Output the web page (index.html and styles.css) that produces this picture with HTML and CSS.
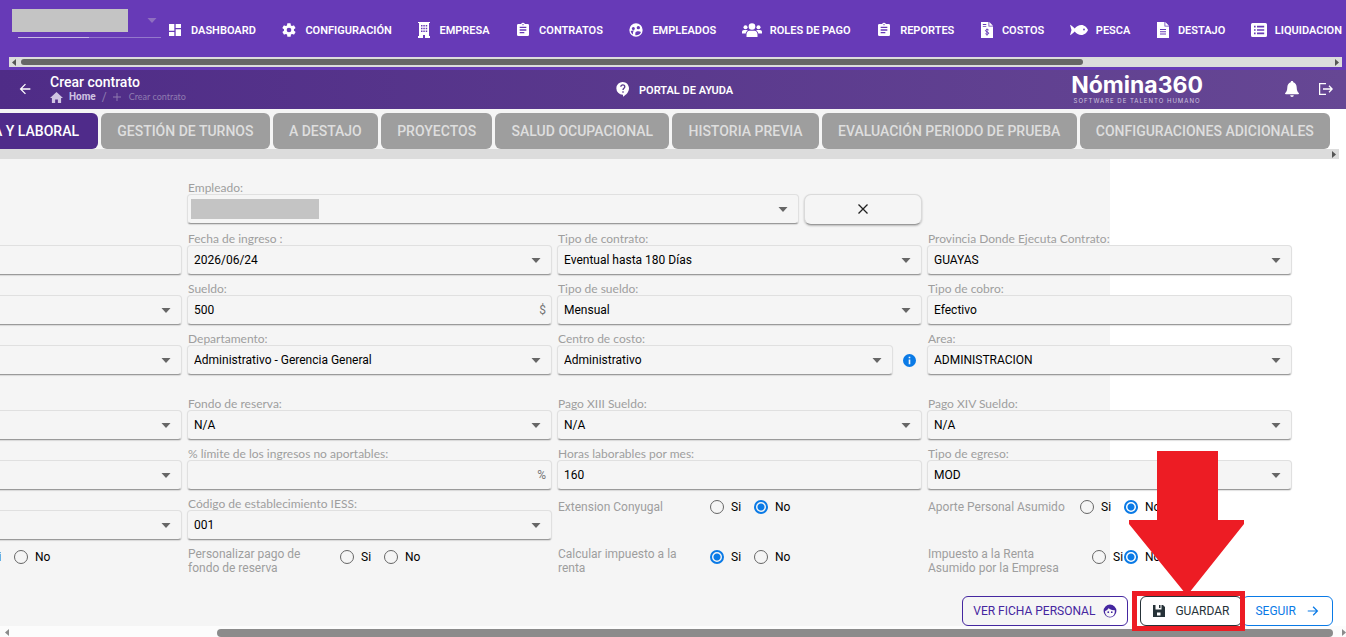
FILE: index.html
```html
<!DOCTYPE html>
<html lang="es">
<head>
    <meta charset="UTF-8">
    <meta name="viewport" content="width=device-width, initial-scale=1.0">
    <title>Crear contrato - Nómina360</title>
    <link rel="stylesheet" href="styles.css">
</head>
<body>

<!-- Iconos compartidos -->
<svg class="sprite" aria-hidden="true">
    <symbol id="caret" viewBox="0 0 10 5"><path d="M0.5 0h9L5 5z"/></symbol>
    <symbol id="clipboard" viewBox="0 0 24 24"><path d="M19 3h-4.2a3 3 0 0 0-5.600 0H5a2 2 0 0 0-2 2v14a2 2 0 0 0 2 2h14a2 2 0 0 0 2-2V5a2 2 0 0 0-2-2zm-7 0a1 1 0 1 1 0 2 1 1 0 0 1 0-2zm2 14H7v-2h7zm3-4H7v-2h10zm0-4H7V7h10z"/></symbol>
    <symbol id="arrow-left" viewBox="0 0 24 24"><path d="M20 11H7.800l5.600-5.600L12 4l-8 8 8 8 1.400-1.400L7.800 13H20z"/></symbol>
</svg>

<header>
    <div class="menu">
        <div class="account">
            <div class="account-row">
                <span class="redacted account-name"></span>
                <svg class="caret"><use href="#caret"/></svg>
            </div>
            <div class="account-line"></div>
        </div>
        <nav>
            <a href="#"><svg class="icon" viewBox="0 0 24 24"><path d="M3 13h8V3H3zm0 8h8v-6H3zm10 0h8V11h-8zm0-18v6h8V3z"/></svg>DASHBOARD</a>
            <a href="#"><svg class="icon" viewBox="0 0 24 24"><path fill-rule="evenodd" d="M19.400 13a7.500 7.500 0 0 0 0-2l2.100-1.600a.5.5 0 0 0 .1-.6l-2-3.500a.5.5 0 0 0-.6-.2l-2.500 1a7 7 0 0 0-1.700-1l-.4-2.700a.5.5 0 0 0-.5-.4h-4a.5.5 0 0 0-.5.4L9 5.100a7 7 0 0 0-1.700 1l-2.500-1a.5.5 0 0 0-.6.2l-2 3.500a.5.5 0 0 0 .1.600L4.500 11a7.500 7.500 0 0 0 0 2l-2.100 1.600a.5.5 0 0 0-.1.600l2 3.500c.1.200.4.300.6.200l2.500-1a7 7 0 0 0 1.700 1l.4 2.700c0 .2.200.4.500.4h4c.3 0 .5-.2.500-.4l.4-2.700a7 7 0 0 0 1.700-1l2.500 1c.2.100.5 0 .6-.2l2-3.500a.5.5 0 0 0-.1-.6zM12 15.500a3.500 3.500 0 1 1 0-7 3.500 3.500 0 0 1 0 7z"/></svg>CONFIGURACIÓN</a>
            <a href="#"><svg class="icon icon-tall" viewBox="0 0 14 16"><path fill-rule="evenodd" d="M1 0h12v1h-1v13h1v2H8v-3H6v3H1v-2h1V1H1zM4 3v1.500h1.500V3zm2.300 0v1.500h1.500V3zm2.400 0v1.500h1.500V3zM4 5.700v1.500h1.500V5.700zm2.300 0v1.500h1.500V5.700zm2.400 0v1.500h1.500V5.700zM4 8.500V10h1.500V8.500zm2.300 0V10h1.500V8.500zm2.400 0V10h1.500V8.500z"/></svg>EMPRESA</a>
            <a href="#"><svg class="icon"><use href="#clipboard"/></svg>CONTRATOS</a>
            <a href="#"><svg class="icon" viewBox="0 0 24 24"><path fill-rule="evenodd" d="M12 2a10 10 0 1 0 0 20 10 10 0 0 0 0-20zM8 7.500a2.300 2.300 0 1 1 0 4.600 2.300 2.300 0 0 1 0-4.600zm7.500-1.500a2.500 2.500 0 1 1 0 5 2.500 2.500 0 0 1 0-5zM4 13.500c1-.8 3.500-1.200 5.500-.6-1.500 1-2 2-2 3.500v2.200A8 8 0 0 1 4 13.500zm7 6.300v-3.300c0-3 6-3.600 8.500-1.500A8 8 0 0 1 11 19.800z"/></svg>EMPLEADOS</a>
            <a href="#"><svg class="icon icon-wide" viewBox="0 0 20 14"><circle cx="10" cy="3.500" r="3.300"/><circle cx="3.500" cy="4.300" r="2"/><circle cx="16.500" cy="4.300" r="2"/><path d="M4.500 14v-2.500c0-2 1.300-3.700 3-3.700h5c1.700 0 3 1.700 3 3.700V14zM0 10.500V9c0-1.300.8-2 2-2h2.600c.5 0 1 .2 1.300.5-1.200.7-2 1.600-2.200 3zM20 10.500V9c0-1.300-.8-2-2-2h-2.600c-.5 0-1 .2-1.300.5 1.200.7 2 1.600 2.200 3z"/></svg>ROLES DE PAGO</a>
            <a href="#"><svg class="icon"><use href="#clipboard"/></svg>REPORTES</a>
            <a href="#"><svg class="icon icon-tall" viewBox="0 0 14 16"><path fill-rule="evenodd" d="M1 0h7.500v4.500H13V16H1zM9.300 0L13 3.700H9.300zM2.800 2v.9h3.500V2zm0 1.900v.9h3.500v-.9z"/><path class="cut" d="M8.700 8c-1-.9-3.200-.6-3.200.7 0 1.600 3.200.9 3.200 2.500 0 1.300-2.300 1.500-3.300.5M7 6.600v7"/></svg>COSTOS</a>
            <a href="#"><svg class="icon icon-fish" viewBox="0 0 18 12"><path fill-rule="evenodd" d="M0 .8c1.800.8 3.500 2.300 4.700 3.700C6.500 2.300 8.700 1 11.300 1 14.500 1 17 3.500 18 6c-1 2.500-3.500 5-6.700 5-2.600 0-4.800-1.300-6.600-3.500C3.500 8.900 1.800 10.400 0 11.200L1.500 6zM14 4.600a.9.900 0 1 0 0 1.800.9.900 0 0 0 0-1.800z"/></svg>PESCA</a>
            <a href="#"><svg class="icon icon-tall" viewBox="0 0 14 16"><path fill-rule="evenodd" d="M1 0h7.500v4.500H13V16H1zM9.300 0L13 3.700H9.300zM4 7v1h6V7zm0 2.200v1h6v-1zm0 2.300v1h6v-1z"/></svg>DESTAJO</a>
            <a href="#"><svg class="icon" viewBox="0 0 16 14"><path fill-rule="evenodd" d="M1.500 0h13A1.500 1.500 0 0 1 16 1.500v11a1.500 1.500 0 0 1-1.500 1.500h-13A1.500 1.500 0 0 1 0 12.500v-11A1.500 1.500 0 0 1 1.500 0zM3 2.800v1.600h1.600V2.800zm3 0v1.600h7.200V2.800zM3 6.200v1.600h1.600V6.200zm3 0v1.600h7.200V6.200zM3 9.600v1.600h1.600V9.600zm3 0v1.600h7.200V9.600z"/></svg>LIQUIDACION</a>
        </nav>
    </div>
    <div class="scroll scroll-menu">
        <svg class="scroll-arrow" viewBox="0 0 4 7"><path d="M4 0v7L0 3.500z"/></svg>
        <div class="thumb"></div>
        <svg class="scroll-arrow" viewBox="0 0 4 7"><path d="M0 0v7l4-3.500z"/></svg>
    </div>
</header>

<div class="titlebar">
    <a href="#" class="back" aria-label="Volver"><svg class="icon"><use href="#arrow-left"/></svg></a>
    <div class="title">
        <h1>Crear contrato</h1>
        <div class="breadcrumb">
            <a href="#"><svg class="icon-home" viewBox="0 0 24 20"><path d="M12 0L0 11h3.500v9h6v-6.500h5V20h6v-9H24z"/></svg>Home</a>
            <span class="slash">/</span>
            <span class="crumb"><svg class="icon-plus" viewBox="0 0 10 10"><path d="M4.400 0h1.200v4.400H10v1.200H5.600V10H4.400V5.600H0V4.400h4.400z"/></svg>Crear contrato</span>
        </div>
    </div>
    <a href="#" class="help"><svg class="icon" viewBox="0 0 24 24"><path d="M11.500 0a9.500 9.500 0 1 0 0 19h.5v3c4.900-2.300 9-7.300 9-12.500C21 4.300 16.700 0 11.500 0z"/><path class="cut-dark" d="M8.700 7.300c0-4 6-3.700 6-.2 0 2.300-2.700 2.300-2.700 5M12 14v2.200"/></svg>PORTAL DE AYUDA</a>
    <div class="logo">
        <span class="logo-name">Nómina360</span>
        <span class="logo-tag">SOFTWARE DE TALENTO HUMANO</span>
    </div>
    <a href="#" class="bell" aria-label="Notificaciones"><svg viewBox="0 0 14 16"><path d="M7 0c-.8 0-1.300.5-1.300 1.300C3.500 2 2.300 4 2.300 6.500c0 3-1 4.500-2.100 5.500-.4.600 0 1.300.7 1.300h12.200c.7 0 1.100-.7.700-1.300-1.100-1-2.100-2.500-2.100-5.500C11.700 4 10.500 2 8.300 1.300 8.300.5 7.800 0 7 0zM5.200 14.200h3.600a1.800 1.800 0 0 1-3.600 0z"/></svg></a>
    <a href="#" class="logout" aria-label="Salir"><svg viewBox="0 0 14 12"><path d="M7 .6H.6v10.800H7M4 6h9M10 2.800L13.200 6 10 9.200"/></svg></a>
</div>

<div class="tabs">
    <button class="tab tab-active">A Y LABORAL</button>
    <button class="tab">GESTIÓN DE TURNOS</button>
    <button class="tab">A DESTAJO</button>
    <button class="tab">PROYECTOS</button>
    <button class="tab">SALUD OCUPACIONAL</button>
    <button class="tab">HISTORIA PREVIA</button>
    <button class="tab">EVALUACIÓN PERIODO DE PRUEBA</button>
    <button class="tab">CONFIGURACIONES ADICIONALES</button>
</div>
<div class="scroll scroll-tabs">
    <svg class="scroll-arrow" viewBox="0 0 4 7"><path d="M0 0v7l4-3.500z"/></svg>
</div>

<main>
    <form>
        <div class="employee">
            <div class="field">
                <label for="empleado">Empleado:</label>
                <div class="box">
                    <span class="redacted employee-name"></span>
                    <select id="empleado"><option></option></select>
                    <svg class="caret"><use href="#caret"/></svg>
                </div>
            </div>
            <button type="button" class="clear" aria-label="Quitar empleado"><svg viewBox="0 0 10 10"><path d="M.5.5l9 9M9.500.5l-9 9"/></svg></button>
        </div>

        <div class="field first">
            <div class="box"><input type="text" aria-label="Número"></div>
        </div>
        <div class="field">
            <label for="fecha">Fecha de ingreso :</label>
            <div class="box"><input type="text" id="fecha" value="2026/06/24"><svg class="caret"><use href="#caret"/></svg></div>
        </div>
        <div class="field">
            <label for="tipoContrato">Tipo de contrato:</label>
            <div class="box"><select id="tipoContrato"><option>Eventual hasta 180 Días</option></select><svg class="caret"><use href="#caret"/></svg></div>
        </div>
        <div class="field">
            <label for="provincia">Provincia Donde Ejecuta Contrato:</label>
            <div class="box"><select id="provincia"><option>GUAYAS</option></select><svg class="caret"><use href="#caret"/></svg></div>
        </div>

        <div class="field first">
            <div class="box"><select aria-label="Cargo"><option></option></select><svg class="caret"><use href="#caret"/></svg></div>
        </div>
        <div class="field">
            <label for="sueldo">Sueldo:</label>
            <div class="box"><input type="text" id="sueldo" value="500"><span class="unit">$</span></div>
        </div>
        <div class="field">
            <label for="tipoSueldo">Tipo de sueldo:</label>
            <div class="box"><select id="tipoSueldo"><option>Mensual</option></select><svg class="caret"><use href="#caret"/></svg></div>
        </div>
        <div class="field">
            <label for="tipoCobro">Tipo de cobro:</label>
            <div class="box"><select id="tipoCobro"><option>Efectivo</option></select></div>
        </div>

        <div class="field first">
            <div class="box"><select aria-label="Sucursal"><option></option></select><svg class="caret"><use href="#caret"/></svg></div>
        </div>
        <div class="field">
            <label for="departamento">Departamento:</label>
            <div class="box"><select id="departamento"><option>Administrativo - Gerencia General</option></select><svg class="caret"><use href="#caret"/></svg></div>
        </div>
        <div class="field">
            <label for="centroCosto">Centro de costo:</label>
            <div class="with-info">
                <div class="box"><select id="centroCosto"><option>Administrativo</option></select><svg class="caret"><use href="#caret"/></svg></div>
                <svg class="info" viewBox="0 0 24 24"><path fill-rule="evenodd" d="M12 0a12 12 0 1 0 0 24 12 12 0 0 0 0-24zm-1.500 5h3v3h-3zm0 5h3v9h-3z"/></svg>
            </div>
        </div>
        <div class="field">
            <label for="area">Area:</label>
            <div class="box"><select id="area"><option>ADMINISTRACION</option></select><svg class="caret"><use href="#caret"/></svg></div>
        </div>

        <div class="field first section">
            <div class="box"><select aria-label="Forma de pago"><option></option></select><svg class="caret"><use href="#caret"/></svg></div>
        </div>
        <div class="field section">
            <label for="fondo">Fondo de reserva:</label>
            <div class="box"><select id="fondo"><option>N/A</option></select><svg class="caret"><use href="#caret"/></svg></div>
        </div>
        <div class="field section">
            <label for="pago13">Pago XIII Sueldo:</label>
            <div class="box"><select id="pago13"><option>N/A</option></select><svg class="caret"><use href="#caret"/></svg></div>
        </div>
        <div class="field section">
            <label for="pago14">Pago XIV Sueldo:</label>
            <div class="box"><select id="pago14"><option>N/A</option></select><svg class="caret"><use href="#caret"/></svg></div>
        </div>

        <div class="field first">
            <div class="box"><select aria-label="Aporte"><option></option></select><svg class="caret"><use href="#caret"/></svg></div>
        </div>
        <div class="field">
            <label for="limite">% límite de los ingresos no aportables:</label>
            <div class="box"><input type="text" id="limite"><span class="unit">%</span></div>
        </div>
        <div class="field">
            <label for="horas">Horas laborables por mes:</label>
            <div class="box"><input type="text" id="horas" value="160"></div>
        </div>
        <div class="field">
            <label for="egreso">Tipo de egreso:</label>
            <div class="box"><select id="egreso"><option>MOD</option></select><svg class="caret"><use href="#caret"/></svg></div>
        </div>

        <div class="field first">
            <div class="box"><select aria-label="Código sectorial"><option></option></select><svg class="caret"><use href="#caret"/></svg></div>
        </div>
        <div class="field">
            <label for="iess">Código de establecimiento IESS:</label>
            <div class="box"><select id="iess"><option>001</option></select><svg class="caret"><use href="#caret"/></svg></div>
        </div>
        <div class="choice choice-single" role="radiogroup" aria-labelledby="extension">
            <span class="choice-name" id="extension">Extension Conyugal</span>
            <label><input type="radio" name="extension">Si</label>
            <label><input type="radio" name="extension" checked>No</label>
        </div>
        <div class="choice choice-single" role="radiogroup" aria-labelledby="aporte">
            <span class="choice-name" id="aporte">Aporte Personal Asumido</span>
            <label><input type="radio" name="aporte">Si</label>
            <label><input type="radio" name="aporte" checked>No</label>
        </div>

        <div class="choice" role="radiogroup">
            <span class="choice-name"></span>
            <label><input type="radio" name="acumula">Si</label>
            <label><input type="radio" name="acumula">No</label>
        </div>
        <div class="choice" role="radiogroup" aria-labelledby="personalizar">
            <span class="choice-name" id="personalizar">Personalizar pago de<br>fondo de reserva</span>
            <label><input type="radio" name="personalizar">Si</label>
            <label><input type="radio" name="personalizar">No</label>
        </div>
        <div class="choice" role="radiogroup" aria-labelledby="calcular">
            <span class="choice-name" id="calcular">Calcular impuesto a la<br>renta</span>
            <label><input type="radio" name="calcular" checked>Si</label>
            <label><input type="radio" name="calcular">No</label>
        </div>
        <div class="choice choice-tight" role="radiogroup" aria-labelledby="impuesto">
            <span class="choice-name" id="impuesto">Impuesto a la Renta<br>Asumido por la Empresa</span>
            <label><input type="radio" name="impuesto">Si</label>
            <label><input type="radio" name="impuesto" checked>No</label>
        </div>
    </form>

    <div class="actions">
        <button class="btn btn-profile">VER FICHA PERSONAL<svg viewBox="0 0 24 24"><path fill-rule="evenodd" d="M12 1a11 11 0 1 0 0 22 11 11 0 0 0 0-22zM3.500 12c3-.8 5.200-2.600 6.300-5 2.200 2.800 6 4 10 3.400A8.500 8.500 0 1 1 3.500 12z"/><circle cx="9" cy="14" r="1.500"/><circle cx="15" cy="14" r="1.500"/></svg></button>
        <div class="save">
            <button class="btn btn-save"><svg viewBox="0 0 12 12"><path fill-rule="evenodd" d="M0 0h2.500v4.500h6V0H10l2 2v10H0zM6 0h1.500v3H6zM4 7.500v3h3.500v-3z"/></svg>GUARDAR</button>
            <div class="frame"></div>
            <svg class="pointer" viewBox="0 0 116 142"><path d="M28 0h61v69h26v4L60 142h-4L0 73v-4h28z"/></svg>
        </div>
        <button class="btn btn-next">SEGUIR<svg viewBox="0 0 24 24"><path d="M3 11h14l-5.600-5.600L13 4l8 8-8 8-1.400-1.400L17 13H3z"/></svg></button>
    </div>
</main>
<div class="scroll scroll-page">
    <svg class="scroll-arrow" viewBox="0 0 4 7"><path d="M4 0v7L0 3.500z"/></svg>
    <div class="thumb"></div>
    <svg class="scroll-arrow" viewBox="0 0 4 7"><path d="M0 0v7l4-3.500z"/></svg>
</div>

</body>
</html>
```
FILE: styles.css
```css
* {
    box-sizing: border-box;
}
body {
    font-family: Roboto, "Liberation Sans", sans-serif;
    font-size: 12px;
    margin: 0;
    min-height: 100vh;
    display: flex;
    flex-direction: column;
    overflow: hidden;
    background: linear-gradient(to right, #f5f5f5 1110px, #fff 1110px);
}
a {
    color: inherit;
    text-decoration: none;
}
button, input, select {
    font: inherit;
    margin: 0;
}
svg {
    fill: currentColor;
    flex: none;
}
.sprite {
    display: none;
}
.icon {
    width: 16px;
    height: 16px;
}
.icon-tall {
    width: 14px;
}
.icon-wide {
    width: 20px;
    height: 14px;
}
.icon-fish {
    width: 18px;
    height: 12px;
}
.caret {
    width: 10px;
    height: 5px;
    color: #666;
}
.redacted {
    background-color: #c4c4c4;
    flex: none;
}

/* Menú principal */
header {
    background-color: #673ab7;
    color: #fff;
    padding-bottom: 3px;
}
.menu {
    display: flex;
    height: 57px;
    padding: 0 4px 0 12px;
    overflow: hidden;
}
.account {
    flex: none;
    width: 149px;
    padding-top: 9px;
}
.account-row {
    display: flex;
    justify-content: space-between;
    align-items: center;
    padding-right: 4px;
}
.account-row .caret {
    color: #8f6fc0;
}
.account-name {
    width: 116px;
    height: 23px;
}
.account-line {
    height: 1px;
    margin: 5px 0 0 6px;
    background: linear-gradient(to right, #c9bbe3 50%, #9478cb 50%);
}
nav {
    display: flex;
    flex: 1;
    justify-content: space-between;
    min-width: 0;
    overflow: hidden;
    padding: 3px 0 0 6px;
}
nav a {
    display: flex;
    align-items: center;
    gap: 8px;
    font-size: 11px;
    font-weight: 600;
    white-space: nowrap;
}
.cut {
    fill: none;
    stroke: #673ab7;
}
.cut-dark {
    fill: none;
    stroke: #5a3a8e;
    stroke-width: 2;
}

/* Barras de desplazamiento */
.scroll {
    display: flex;
    align-items: center;
    height: 10px;
    background-color: #dcdcdc;
    color: #555;
}
.scroll-arrow {
    width: 4px;
    height: 7px;
}
.thumb {
    border-radius: 4px;
}
.scroll-menu {
    margin: 0 4px 0 9px;
    padding: 0 3px;
    justify-content: space-between;
}
.scroll-menu .thumb {
    width: 80%;
    height: 6px;
    margin: 0 auto 0 5px;
    background-color: #666;
}
.scroll-tabs {
    margin-right: 7px;
    padding-right: 3px;
    justify-content: flex-end;
}
.scroll-page {
    height: 11px;
    padding: 2px 0 0 5px;
    background-color: #fcfcfc;
    color: #8b8b8b;
}
.scroll-page .thumb {
    flex: 1;
    height: 8px;
    margin: 0 9px 0 208px;
    background-color: #8b8b8b;
}

/* Barra de título */
.titlebar {
    display: flex;
    align-items: center;
    height: 39px;
    padding: 0 13px 1px 17px;
    background: linear-gradient(to right, #4f2c87, #664794);
    color: #fff;
}
.back {
    display: flex;
    width: 33px;
}
.title {
    width: 565px;
}
h1 {
    margin: 0;
    font-size: 14px;
    font-weight: 500;
    line-height: 16px;
}
.breadcrumb {
    display: flex;
    align-items: center;
    gap: 6px;
    font-size: 10px;
    line-height: 14px;
    color: #8f7bb0;
}
.breadcrumb a {
    display: flex;
    align-items: center;
    gap: 6px;
    color: #d0c4e2;
    font-weight: 700;
}
.crumb {
    display: flex;
    align-items: center;
    gap: 8px;
    font-family: Lato, sans-serif;
    font-size: 9px;
}
.icon-home {
    width: 13px;
    height: 11px;
}
.icon-plus {
    width: 8px;
    height: 8px;
}
.slash {
    font-size: 12px;
}
.help {
    display: flex;
    align-items: center;
    gap: 8px;
    padding-top: 2px;
    font-size: 11px;
    font-weight: 600;
}
.logo {
    display: flex;
    flex-direction: column;
    align-items: center;
    margin-left: auto;
}
.logo-name {
    font-family: Inter, "Open Sans", sans-serif;
    font-size: 23px;
    font-weight: 700;
    line-height: 24px;
}
.logo-tag {
    font-family: Inter, "Open Sans", sans-serif;
    font-size: 6px;
    line-height: 8px;
    letter-spacing: 1px;
    color: #cfc3df;
}
.bell {
    display: flex;
    margin-left: 82px;
}
.bell svg {
    width: 14px;
    height: 16px;
}
.logout {
    display: flex;
    margin-left: 20px;
}
.logout svg {
    width: 14px;
    height: 12px;
    fill: none;
    stroke: currentColor;
    stroke-width: 1.3;
}

/* Pestañas */
.tabs {
    display: flex;
    gap: 3px;
    padding: 4px 16px 0 0;
}
.tab {
    flex: auto;
    height: 36px;
    padding: 0 12px;
    border: none;
    border-radius: 6px;
    background-color: #9e9e9e;
    color: #dedede;
    font-size: 14px;
    font-weight: 500;
    white-space: nowrap;
    cursor: pointer;
}
.tab-active {
    flex: none;
    width: 130px;
    margin-left: -32px;
    padding-right: 19px;
    background-color: #4f2b8a;
    color: #fff;
    text-align: right;
}

/* Formulario */
main {
    flex: 1;
    display: flex;
    flex-direction: column;
}
form {
    display: grid;
    grid-template-columns: repeat(4, 1fr);
    gap: 6px 5px;
    margin: 0 54px 0 -183px;
    padding-top: 21px;
}
.employee {
    grid-column: 2 / 4;
    display: flex;
    align-items: flex-start;
    gap: 5px;
}
.employee .field {
    flex: 1;
}
.employee + .field {
    grid-column: 1;
}
.field {
    display: flex;
    flex-direction: column;
    min-width: 0;
}
.field label {
    height: 14px;
    padding-left: 1px;
    font-family: Lato, sans-serif;
    line-height: 16px;
    color: #9e9e9e;
}
.first {
    padding-top: 14px;
}
.section {
    margin-top: 15px;
}
.box {
    display: flex;
    align-items: center;
    height: 30px;
    padding: 0 10px 0 6px;
    border: 1px solid #e0e0e0;
    border-bottom-color: #9a9a9a;
    border-radius: 4px;
    background-color: #f5f5f5;
    box-shadow: 0 1px 1px rgba(0, 0, 0, 0.12);
}
.box input, .box select {
    flex: 1;
    min-width: 0;
    height: 100%;
    padding: 0;
    border: none;
    background: none;
    color: #000;
    appearance: none;
    outline: none;
}
.unit {
    color: #757575;
    margin-right: -5px;
}
.employee-name {
    width: 128px;
    height: 20px;
    margin-left: -3px;
}
.clear {
    width: 118px;
    height: 31px;
    margin-top: 14px;
    border: 1px solid #dadada;
    border-bottom-color: #9a9a9a;
    border-radius: 7px;
    background-color: #f5f5f5;
    box-shadow: 0 1px 2px rgba(0, 0, 0, 0.25);
    cursor: pointer;
}
.clear svg {
    width: 10px;
    height: 10px;
    stroke: #212121;
    stroke-width: 1.3;
}
.with-info {
    display: flex;
    align-items: center;
}
.with-info .box {
    flex: 1;
}
.info {
    width: 13px;
    height: 13px;
    margin: 0 6px 0 10px;
    color: #0a7ae6;
}
.choice {
    display: flex;
    align-items: flex-start;
    padding-left: 1px;
}
.choice-name {
    width: 152px;
    line-height: 14px;
    color: #9e9e9e;
    padding-top: 1px;
}
.choice-single .choice-name {
    line-height: 21px;
}
.choice label {
    display: flex;
    align-items: center;
    gap: 7px;
    width: 44px;
    height: 21px;
    color: #000;
}
.choice input {
    flex: none;
    width: 14px;
    height: 14px;
    appearance: none;
    border: 1px solid #666;
    border-radius: 50%;
}
.choice input:checked {
    border: 2px solid #0a7ae6;
    background: radial-gradient(#0a7ae6 3px, transparent 4px);
}
.choice-tight .choice-name {
    width: 164px;
}
.choice-tight .choice-name + label {
    width: 32px;
}

/* Botones inferiores */
.actions {
    display: flex;
    justify-content: flex-end;
    margin-top: auto;
    padding-right: 13px;
}
.btn {
    display: flex;
    align-items: center;
    height: 30px;
    padding: 0 12px;
    gap: 10px;
    border: 1px solid;
    border-radius: 6px;
    background-color: transparent;
    cursor: pointer;
}
.btn svg {
    width: 14px;
    height: 14px;
}
.btn-profile {
    color: #4527a0;
    gap: 8px;
    padding: 0 10px;
    margin-right: 12px;
}
.btn-save {
    color: #263238;
}
.btn-save svg {
    width: 12px;
    height: 12px;
}
.btn-next {
    color: #0a7ae6;
}
.save {
    position: relative;
}
.frame {
    position: absolute;
    inset: -5px -3px -5px -8px;
    border: 5px solid #ed1c24;
    pointer-events: none;
}
.pointer {
    position: absolute;
    right: -3px;
    bottom: 33px;
    width: 116px;
    height: 142px;
    color: #ed1c24;
    pointer-events: none;
}
```
